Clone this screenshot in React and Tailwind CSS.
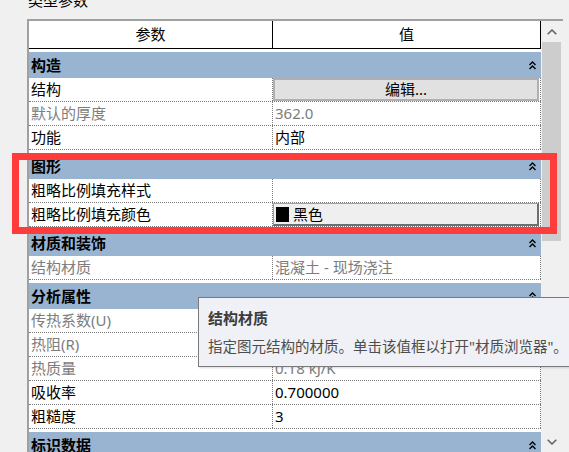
import React from 'react';

const FONT = { fontFamily: '"Noto Sans", "Noto Sans CJK SC", sans-serif' };

const groups = [
  {
    title: '构造',
    rows: [
      { name: '结构', kind: 'button', value: '编辑...' },
      { name: '默认的厚度', value: '362.0', muted: true },
      { name: '功能', value: '内部' },
    ],
  },
  {
    title: '图形',
    rows: [
      { name: '粗略比例填充样式', value: '' },
      { name: '粗略比例填充颜色', kind: 'color', value: '黑色' },
    ],
  },
  {
    title: '材质和装饰',
    rows: [{ name: '结构材质', value: '混凝土 - 现场浇注', muted: true }],
  },
  {
    title: '分析属性',
    rows: [
      { name: '传热系数(U)', value: '', muted: true },
      { name: '热阻(R)', value: '', muted: true },
      { name: '热质量', value: '0.18 kJ/K', muted: true },
      { name: '吸收率', value: '0.700000' },
      { name: '粗糙度', value: '3' },
    ],
  },
  { title: '标识数据', rows: [] },
];

const CollapseIcon = () => (
  <svg width="7" height="9" viewBox="0 0 7 9" className="mr-[5px]">
    <path d="M0.5 4 L3.5 1 L6.5 4 M0.5 8 L3.5 5 L6.5 8" fill="none" stroke="#000" strokeWidth="1.4" />
  </svg>
);

const Row = ({ row }) => {
  const tone = row.muted ? 'text-[#7d7d7d]' : 'text-black';
  return (
    <div className="flex h-6 border-b border-dotted border-[#7a7a7a]">
      <div className={`w-[244px] pl-[2px] flex items-center border-r border-dotted border-[#7a7a7a] ${tone}`}>
        {row.name}
      </div>
      <div className={`flex-1 flex items-stretch border-r border-dotted border-[#7a7a7a] ${tone}`}>
        {row.kind === 'button' && (
          <div className="flex-1 flex items-center justify-center bg-[#e1e1e1] border-2 border-[#b0b0b0] mr-px">
            {row.value}
          </div>
        )}
        {row.kind === 'color' && (
          <div className="flex-1 flex items-center bg-[#efefef] border border-[#a0a0a0] border-r-2 border-b-2 border-r-[#6f6f6f] border-b-[#6f6f6f] mr-px">
            <div className="w-[13px] h-[15px] bg-black ml-[2px] mr-[4px]"></div>
            {row.value}
          </div>
        )}
        {!row.kind && <div className="pl-[2px] flex items-center">{row.value}</div>}
      </div>
    </div>
  );
};

const Group = ({ group }) => (
  <div className="pt-[3px]">
    <div className="h-[26px] bg-[#99b4d1] flex items-center justify-between pl-[2px] font-bold text-black">
      <span>{group.title}</span>
      <CollapseIcon />
    </div>
    {group.rows.map((r) => (
      <Row key={r.name} row={r} />
    ))}
  </div>
);

const App = () => {
  return (
    <div className="w-[569px] h-[452px] bg-[#f0f0f0] relative overflow-hidden text-[15px]" style={FONT}>
      {/* panel title, cut at the top */}
      <div className="h-[19px] pl-[28px] overflow-hidden">
        <div className="-mt-[9px] leading-[18px] text-black">类型参数</div>
      </div>

      <div className="ml-[27px] w-[536px] h-[433px] flex border-t-2 border-l-2 border-[#a0a0a0]">
        {/* grid */}
        <div className="w-[512px] bg-white">
          <div className="flex h-[28px] border-b border-black">
            <div className="w-[244px] flex items-center justify-center border-r border-black">参数</div>
            <div className="flex-1 flex items-center justify-center border-r border-black">值</div>
          </div>
          {groups.map((g) => (
            <Group key={g.title} group={g} />
          ))}
        </div>

        {/* scrollbar */}
        <div className="w-[22px] bg-[#f0f0f0] flex flex-col">
          <div className="h-[21px] flex items-center justify-center">
            <svg width="10" height="6" viewBox="0 0 10 6">
              <path d="M0.7 5.3 L5 1 L9.3 5.3" fill="none" stroke="#606060" strokeWidth="1.5" />
            </svg>
          </div>
          <div className="ml-px w-[19px] h-[199px] bg-[#cdcdcd]"></div>
          <div className="flex-1"></div>
          <div className="h-[21px] flex items-center justify-center">
            <svg width="10" height="6" viewBox="0 0 10 6">
              <path d="M0.7 0.7 L5 5 L9.3 0.7" fill="none" stroke="#606060" strokeWidth="1.5" />
            </svg>
          </div>
        </div>
      </div>

      {/* red annotation frame */}
      <div className="absolute left-[12px] top-[153px] w-[545px] h-[81px] border-[7px] border-[#ff3b3b]"></div>

      {/* tooltip */}
      <div className="absolute left-[198px] top-[297px] w-[390px] h-[70px] bg-[#f0f1f6] border border-[#7a7a7a] shadow-[1px_1px_2px_rgba(0,0,0,0.15)] pl-[9px]">
        <div className="mt-[10px] font-bold text-[#3c3c3c] leading-[20px]">结构材质</div>
        <div className="mt-[8px] text-[14.5px] text-[#4d4d4d] leading-[20px] whitespace-nowrap">
          指定图元结构的材质。单击该值框以打开"材质浏览器"。
        </div>
      </div>
    </div>
  );
};

export default App;
